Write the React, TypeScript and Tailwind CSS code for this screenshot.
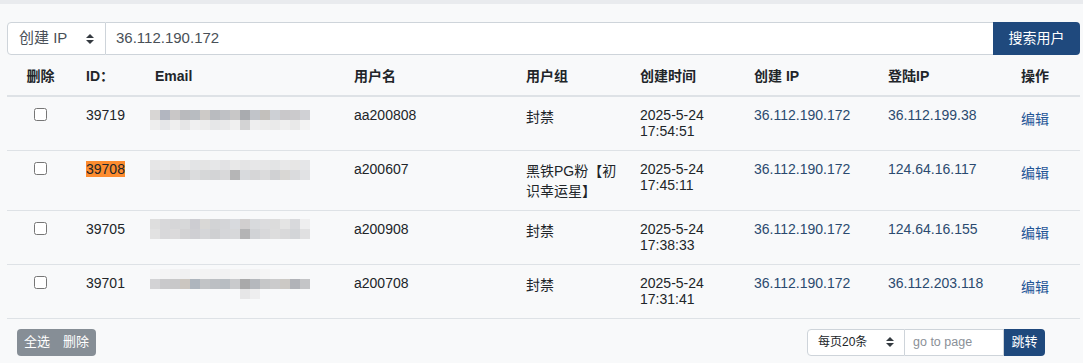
import React from 'react'

interface UserRow {
  id: string
  highlight?: boolean
  blur: { top: string; rows: string[][] }
  username: string
  group: string
  date: string
  time: string
  createIp: string
  loginIp: string
  tall?: boolean
}

const rows: UserRow[] = [
  {
    id: '39719',
    blur: {
      top: 'mt-[3px]',
      rows: [
        ['#d8d6d4', '#b2b6c0', '#c9c7c7', '#b9babd', '#b8bcc1', '#cdcac7', '#b9bbbf', '#bfc1c5', '#c8c7c7', '#a9abaf', '#c1c4c9', '#c3c0bc', '#cdd0d5', '#c9c8ca', '#cbcacc', '#d0d1d5'],
        ['#eeeeee', '#e6e7e9', '#efefef', '#e6e6e7', '#f0f0f1', '#ededed', '#e6e7e8', '#e9e9ea', '#f0f0f0', '#d3d3d4', '#eeeeef', '#ececec', '#eaeaea', '#efefef', '#e9e9e9', '#f3f3f3']
      ]
    },
    username: 'aa200808',
    group: '封禁',
    date: '2025-5-24',
    time: '17:54:51',
    createIp: '36.112.190.172',
    loginIp: '36.112.199.38'
  },
  {
    id: '39708',
    highlight: true,
    blur: {
      top: 'mt-[-1px]',
      rows: [
        ['#e6e6e7', '#e8e8e9', '#e4e4e5', '#e9e9ea', '#e3e4e6', '#e4e4e4', '#e6e7e8', '#e2e2e4', '#e8e8e8', '#e4e4e5', '#e7e7e8', '#e6e6e7', '#e3e4e5', '#e8e8e9', '#e7e6e5', '#e5e6e8'],
        ['#e0e0e1', '#dcdcdd', '#d9d9d7', '#d2d2d3', '#dbdcdd', '#d6d7d8', '#d3d4d6', '#d9d9da', '#b5b5b6', '#d8dadd', '#d6d6d7', '#dbdbdc', '#d0d1d3', '#d9d7d4', '#dadbdd', '#e1e2e4']
      ]
    },
    username: 'a200607',
    group: '黑铁PG粉【初识幸运星】',
    date: '2025-5-24',
    time: '17:45:11',
    createIp: '36.112.190.172',
    loginIp: '124.64.16.117',
    tall: true
  },
  {
    id: '39705',
    blur: {
      top: 'mt-[-2px]',
      rows: [
        ['#dedede', '#d8d8da', '#d6d6d8', '#d7d8d9', '#cdcdd2', '#d9d8d6', '#d2d3d5', '#d4d5d8', '#d8dade', '#d1cfcf', '#d8dadd', '#dcdcde', '#dcdcdc', '#e4e4e4', '#d8d9dc', '#eeeeef'],
        ['#e2e2e2', '#d8d8da', '#dbdadb', '#d3d3d4', '#cfcfd3', '#d5d6d8', '#cfd0d2', '#d5d6d9', '#d7d8da', '#b4b4b5', '#d1d3d6', '#d8d8da', '#dddddd', '#d9d9da', '#d3d5d8', '#e0e0e1']
      ]
    },
    username: 'a200908',
    group: '封禁',
    date: '2025-5-24',
    time: '17:38:33',
    createIp: '36.112.190.172',
    loginIp: '124.64.16.155'
  },
  {
    id: '39701',
    blur: {
      top: 'mt-[-6px]',
      rows: [
        ['#f6f6f7', '#f4f4f5', '#f2f2f3', '#f0f0f1', '#f4f4f5', '#f3f3f3', '#f2f2f3', '#f1f1f2', '#f4f4f4', '#f3f3f4', '#f2f2f3', '#f5f5f5', '#f7f7f8', '#f7f7f8', '#f8f9fa', '#f8f9fa'],
        ['#d3d3d5', '#c9c9cb', '#c8c8c9', '#cbc6c0', '#aeb5bd', '#c2c4c6', '#bcbfc3', '#b8bdc2', '#c9cacc', '#a9a9aa', '#b5b8bd', '#c6c7c8', '#cbcbcc', '#ccc9c5', '#b1b3b8', '#c4c5c7'],
        ['#f8f9fa', '#f8f9fa', '#f8f9fa', '#f8f9fa', '#f8f9fa', '#f8f9fa', '#f8f9fa', '#f8f9fa', '#f8f9fa', '#e6e6e7', '#eeeeef', '#f8f9fa', '#f8f9fa', '#f8f9fa', '#f8f9fa', '#f8f9fa']
      ]
    },
    username: 'a200708',
    group: '封禁',
    date: '2025-5-24',
    time: '17:31:41',
    createIp: '36.112.190.172',
    loginIp: '36.112.203.118'
  }
]

function SelectArrow() {
  return (
    <svg width="8" height="10" viewBox="0 0 4 5" className="shrink-0">
      <path d="M2 0L0 2h4zm0 5L0 3h4z" fill="#343a40" />
    </svg>
  )
}

// pixelated placeholder for the masked email address
function BlurredEmail({ top, cells }: { top: string; cells: string[][] }) {
  return (
    <div className={`flex flex-col ${top}`}>
      {cells.map((line, i) => (
        <div key={i} className="flex">
          {line.map((c, j) => (
            <div key={j} className="w-[10px] h-[10px]" style={{ backgroundColor: c }} />
          ))}
        </div>
      ))}
    </div>
  )
}

export default function App() {
  return (
    <div className="min-h-screen bg-[#f8f9fa] text-[#212529] font-['Liberation_Sans','Noto_Sans_CJK_SC',sans-serif]">
      <div className="h-[4px] bg-[#e9ebee]" />

      <div className="pl-[7px] pr-[3px] pt-[18px]">
        {/* Search */}
        <div className="flex h-[33px]">
          <div className="flex items-center justify-between w-[99px] pl-[11px] pr-[11px] bg-white border border-[#ced4da] rounded-l-[4px] text-[15px] text-[#495057]">
            <span>创建 IP</span>
            <SelectArrow />
          </div>
          <div className="flex-1 flex items-center pl-[10px] bg-white border-y border-[#ced4da] text-[15px] text-[#495057]">
            36.112.190.172
          </div>
          <button className="w-[87px] bg-[#1f497d] text-white text-[14px] rounded-r-[4px]">
            搜索用户
          </button>
        </div>

        {/* Table */}
        <table className="w-full table-fixed border-collapse text-[14px]">
          <colgroup>
            <col className="w-[67px]" />
            <col className="w-[69px]" />
            <col className="w-[199px]" />
            <col className="w-[172px]" />
            <col className="w-[114px]" />
            <col className="w-[114px]" />
            <col className="w-[134px]" />
            <col className="w-[133px]" />
            <col className="w-[71px]" />
          </colgroup>
          <thead>
            <tr className="border-b-2 border-[#dee2e6] text-left font-bold leading-4">
              <th className="pt-[13px] pb-[11px] text-center">删除</th>
              <th className="pt-[13px] pb-[11px] px-3">ID：</th>
              <th className="pt-[13px] pb-[11px] px-3">Email</th>
              <th className="pt-[13px] pb-[11px] px-3">用户名</th>
              <th className="pt-[13px] pb-[11px] px-3">用户组</th>
              <th className="pt-[13px] pb-[11px] px-3">创建时间</th>
              <th className="pt-[13px] pb-[11px] px-3">创建 IP</th>
              <th className="pt-[13px] pb-[11px] px-3">登陆IP</th>
              <th className="pt-[13px] pb-[11px] px-3">操作</th>
            </tr>
          </thead>
          <tbody className="leading-[normal]">
            {rows.map(r => (
              <tr key={r.id} className={`border-b border-[#dee2e6] align-top ${r.tall ? '' : 'h-[54px]'}`}>
                <td className="pt-[10px] text-center">
                  <input type="checkbox" className="w-[13px] h-[13px] m-0 mt-[1px] align-top" />
                </td>
                <td className="pt-[10px] px-3">
                  {r.highlight ? <span className="bg-[#fd8c2f]">{r.id}</span> : r.id}
                </td>
                <td className="pt-[10px] pl-[7px]">
                  <BlurredEmail top={r.blur.top} cells={r.blur.rows} />
                </td>
                <td className="pt-[10px] px-3">{r.username}</td>
                <td className="pt-[10px] pb-[9px] pl-3 pr-[4px] leading-[20px]">{r.group}</td>
                <td className="pt-[10px] px-3">
                  {r.date}
                  <br />
                  {r.time}
                </td>
                <td className="pt-[10px] px-3 text-[#2b4a6f]">{r.createIp}</td>
                <td className="pt-[10px] px-3 text-[#2b4a6f]">{r.loginIp}</td>
                <td className="pt-[11px] px-3">
                  <a className="text-[#1f5596]">编辑</a>
                </td>
              </tr>
            ))}
          </tbody>
        </table>

        {/* Footer */}
        <div className="flex items-center justify-between mt-[10px] pl-[10px] pr-[35px]">
          <div className="flex h-[27px] bg-[#868e96] rounded-[4px] text-white text-[13px]">
            <button className="pl-[7px] pr-[7px]">全选</button>
            <button className="pl-[6px] pr-[7px]">删除</button>
          </div>
          <div className="flex h-[27px]">
            <div className="flex items-center justify-between w-[98px] pl-[10px] pr-[10px] bg-white border border-[#ced4da] rounded-l-[4px] text-[12px] text-[#212529]">
              <span>每页20条</span>
              <SelectArrow />
            </div>
            <div className="flex items-center w-[99px] pl-[8px] bg-white border-y border-r border-[#ced4da] text-[12.5px] text-[#8a9097]">
              go to page
            </div>
            <button className="w-[41px] bg-[#1f497d] text-white text-[13px] rounded-r-[4px]">
              跳转
            </button>
          </div>
        </div>
      </div>
    </div>
  )
}
